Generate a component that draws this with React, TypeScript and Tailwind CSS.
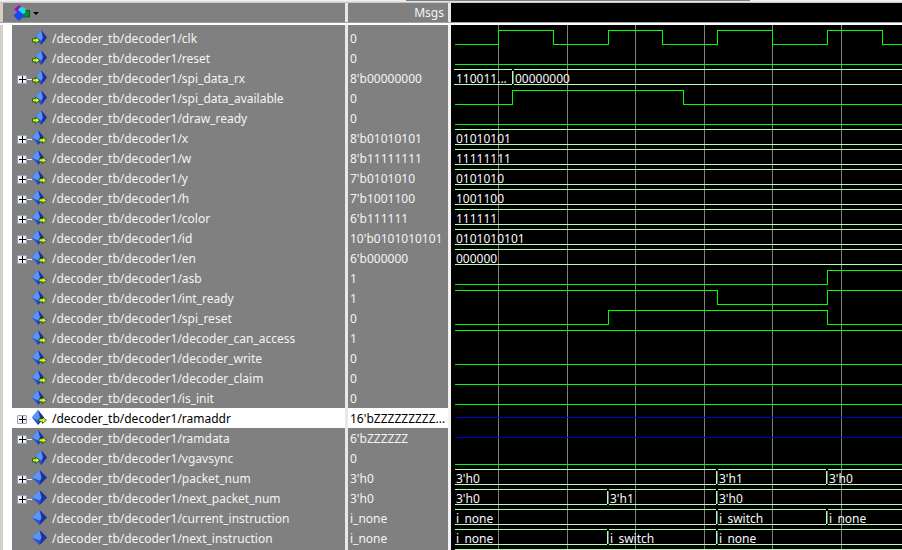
import React from "react";

type Dir = "in" | "out" | "none";

interface Signal {
  name: string;
  value: string;
  dir: Dir;
  expand?: boolean;
  selected?: boolean;
}

const signals: Signal[] = [
  { name: "clk", value: "0", dir: "in" },
  { name: "reset", value: "0", dir: "in" },
  { name: "spi_data_rx", value: "8'b00000000", dir: "in", expand: true },
  { name: "spi_data_available", value: "0", dir: "in" },
  { name: "draw_ready", value: "0", dir: "in" },
  { name: "x", value: "8'b01010101", dir: "out", expand: true },
  { name: "w", value: "8'b11111111", dir: "out", expand: true },
  { name: "y", value: "7'b0101010", dir: "out", expand: true },
  { name: "h", value: "7'b1001100", dir: "out", expand: true },
  { name: "color", value: "6'b111111", dir: "out", expand: true },
  { name: "id", value: "10'b0101010101", dir: "out", expand: true },
  { name: "en", value: "6'b000000", dir: "out", expand: true },
  { name: "asb", value: "1", dir: "out" },
  { name: "int_ready", value: "1", dir: "out" },
  { name: "spi_reset", value: "0", dir: "out" },
  { name: "decoder_can_access", value: "1", dir: "out" },
  { name: "decoder_write", value: "0", dir: "out" },
  { name: "decoder_claim", value: "0", dir: "out" },
  { name: "is_init", value: "0", dir: "out" },
  { name: "ramaddr", value: "16'bZZZZZZZZZ...", dir: "out", expand: true, selected: true },
  { name: "ramdata", value: "6'bZZZZZZ", dir: "out", expand: true },
  { name: "vgavsync", value: "0", dir: "in" },
  { name: "packet_num", value: "3'h0", dir: "none", expand: true },
  { name: "next_packet_num", value: "3'h0", dir: "none", expand: true },
  { name: "current_instruction", value: "i_none", dir: "none" },
  { name: "next_instruction", value: "i_none", dir: "none" },
];

const rowTop = (i: number) => 28 + i * 20;
const gridX = [498, 567, 635, 704, 772, 841];

// bus rows: row index -> [label, x of the transition]
const buses: { row: number; start?: number; segs: [string, number][] }[] = [
  { row: 2, start: 454, segs: [["110011...", 455], ["00000000", 513]] },
  { row: 5, segs: [["01010101", 455]] },
  { row: 6, segs: [["11111111", 455]] },
  { row: 7, segs: [["0101010", 455]] },
  { row: 8, segs: [["1001100", 455]] },
  { row: 9, segs: [["111111", 455]] },
  { row: 10, segs: [["0101010101", 455]] },
  { row: 11, segs: [["000000", 455]] },
  { row: 22, segs: [["3'h0", 455], ["3'h1", 717], ["3'h0", 827]] },
  { row: 23, segs: [["3'h0", 455], ["3'h1", 608], ["3'h0", 717]] },
  { row: 24, segs: [["i_none", 455], ["i_switch", 717], ["i_none", 827]] },
  { row: 25, segs: [["i_none", 455], ["i_switch", 608], ["i_none", 717]] },
];

// bit rows: row, starts high?, toggle points
const bits: { row: number; high: boolean; edges: number[] }[] = [
  { row: 0, high: false, edges: [498, 553, 608, 662, 717, 772, 827, 882] },
  { row: 1, high: false, edges: [] },
  { row: 3, high: false, edges: [512, 683] },
  { row: 4, high: false, edges: [] },
  { row: 12, high: false, edges: [827] },
  { row: 13, high: true, edges: [717, 827] },
  { row: 14, high: false, edges: [608, 827] },
  { row: 15, high: true, edges: [] },
  { row: 16, high: false, edges: [] },
  { row: 17, high: false, edges: [] },
  { row: 18, high: false, edges: [] },
  { row: 21, high: false, edges: [] },
];

function bitPath(b: { row: number; high: boolean; edges: number[] }) {
  const hi = rowTop(b.row) + 2.5;
  const lo = rowTop(b.row) + 16.5;
  let level = b.high;
  let d = `M455 ${level ? hi : lo}`;
  for (const e of b.edges) {
    level = !level;
    d += ` H${e + 0.5} V${level ? hi : lo}`;
  }
  return d + " H902";
}

function busPath(row: number, start: number, segs: [string, number][]) {
  const top = rowTop(row) + 1.5;
  const bot = rowTop(row) + 16.5;
  const stops = segs.slice(1).map((s) => s[1]);
  let d = "";
  let x = start;
  for (const s of stops) {
    d += `M${x} ${top} H${s - 1} M${x} ${bot} H${s - 1} `;
    d += `M${s - 0.5} ${top + 1} V${bot - 1} `;
    x = s + 1;
  }
  return d + `M${x} ${top} H902 M${x} ${bot} H902`;
}

// darker second half of the transition mark
function busEdgePath(row: number, segs: [string, number][]) {
  const top = rowTop(row) + 2.5;
  const bot = rowTop(row) + 15.5;
  return segs
    .slice(1)
    .map((s) => `M${s[1] + 0.5} ${top} V${bot}`)
    .join(" ");
}

const Logo = () => (
  <svg width="17" height="17" viewBox="0 0 17 17">
    <path d="M0.5 5.5 L6 0.5 L11.5 5.5 L6 10 Z" fill="#7a1fa0" stroke="#e040e0" />
    <rect x="9.5" y="6.5" width="7" height="6.5" fill="#0a8a30" stroke="#0b5a20" />
    <circle cx="9" cy="6.5" r="3.6" fill="#20d8e8" />
    <path d="M6 6.5 L11.5 11.5 L6 17 L0.5 11.5 Z" fill="#1848f0" />
  </svg>
);

const SignalIcon = ({ dir }: { dir: Dir }) => {
  // diamond shifts away from the arrow when a port arrow is shown
  const l = dir === "in" ? 3 : 0;
  const r = dir === "out" ? 12 : 15;
  const c = (l + r) / 2;
  return (
    <svg width="15" height="15" viewBox="0 0 15 15" className="shrink-0 self-start mt-[2px]">
      <path d={`M${c} 0 L${r} 7.5 L${c} 15 L${l} 7.5 Z`} fill="#2a50d8" />
      <path d={`M${c} 0 L${l} 7.5 L${c} 10.5 L${r - 3} 6 Z`} fill="#5b94f4" />
      <path d={`M${c} 0 L${r} 7.5 L${c} 15 L${c + 2} 7.5 Z`} fill="#1c2f9c" />
      {dir === "in" && (
        <path d="M0.5 8.8 H3.8 V7 L7.8 10.3 L3.8 13.6 V11.8 H0.5 Z" fill="#c6ff2a" stroke="#123000" strokeWidth="0.7" />
      )}
      {dir === "out" && (
        <path d="M7 8.8 H10.5 V7 L14.5 10.3 L10.5 13.6 V11.8 H7 Z" fill="#c6ff2a" stroke="#123000" strokeWidth="0.7" />
      )}
    </svg>
  );
};

const Expander = ({ show }: { show?: boolean }) =>
  show ? (
    <div className="flex items-center shrink-0 self-start mt-[7px]">
      <div className="w-[10px] h-[9px] bg-[#eef0f8] border border-[#9aa0b4] rounded-[1px] flex items-center justify-center">
        <svg width="7" height="7" viewBox="0 0 7 7">
          <path d="M0 3.5 H7 M3.5 0 V7" stroke="#000" strokeWidth="1" />
        </svg>
      </div>
      <div className="w-[5px] h-px bg-[#f0f0f0]" />
    </div>
  ) : (
    <div className="w-[15px] shrink-0" />
  );

const App = () => {
  return (
    <div className="w-[902px] h-[550px] overflow-hidden flex flex-col bg-[#d4d0c8] font-['Noto_Sans',sans-serif] text-[12px]">
      <div className="h-px flex bg-[#f0f0f0]">
        <div className="w-[406px]" />
        <div className="w-[344px] bg-[#808080]" />
      </div>
      <div className="h-[2px] bg-[#e4e4e4] border-b border-[#c8c8c8]" />
      <div className="h-[19px] flex pl-[3px]">
        <div className="w-[342px] bg-[#808080] flex items-center gap-[3px] pl-[10px]">
          <Logo />
          <div className="w-0 h-0 border-x-[3px] border-x-transparent border-t-[3px] border-t-black mt-[2px]" />
        </div>
        <div className="w-[3px] bg-[#e8e8e8]" />
        <div className="w-[100px] bg-[#808080] text-right pr-[4px] text-[#f4f4f4] leading-[19px]">Msgs</div>
        <div className="w-[3px] bg-[#e8e8e8]" />
        <div className="flex-1 bg-black" />
      </div>
      <div className="h-[3px] bg-white border-t border-[#a0a0a0]" />
      <div className="flex-1 flex min-h-0">
        <div className="w-[342px] ml-[3px] pl-[9px] bg-white shrink-0">
          <div className="h-full bg-[#808080] pt-[3px]">
            {signals.map((s) => (
              <div
                key={s.name}
                className={`h-5 flex pl-[5px] whitespace-nowrap ${
                  s.selected ? "bg-white text-black" : "text-[#f4f4f4]"
                }`}
              >
                <Expander show={s.expand} />
                <SignalIcon dir={s.dir} />
                <span className="ml-[5px] leading-[22px]">/decoder_tb/decoder1/{s.name}</span>
              </div>
            ))}
          </div>
        </div>
        <div className="w-[3px] bg-[#e8e8e8] shrink-0" />
        <div className="w-[100px] bg-[#808080] pt-[3px] shrink-0">
          {signals.map((s) => (
            <div
              key={s.name}
              className={`h-5 pl-[2px] leading-[22px] whitespace-nowrap overflow-hidden ${
                s.selected ? "bg-white text-black" : "text-[#f4f4f4]"
              }`}
            >
              {s.value}
            </div>
          ))}
        </div>
        <div className="w-[3px] bg-[#f4f4f4] shrink-0" />
        <div className="flex-1 bg-black">
          <svg width="451" height="525" viewBox="451 25 451 525" className="block">
            {gridX.map((x) => (
              <path key={x} d={`M${x + 0.5} 25 V550`} stroke="#808080" />
            ))}
            {buses.map((b) =>
              b.segs.map(([label, x], i) => (
                <text
                  key={`${b.row}-${i}`}
                  x={i === 0 ? x + 1 : x + 2}
                  y={rowTop(b.row) + 15}
                  fill="#f8f8f8"
                  fontSize="12"
                >
                  {label}
                </text>
              ))
            )}
            {bits.map((b) => (
              <path key={b.row} d={bitPath(b)} fill="none" stroke="#00ff00" shapeRendering="crispEdges" />
            ))}
            <g fill="none" stroke="#b4ffb4" shapeRendering="crispEdges">
              {buses.map((b) => (
                <path key={b.row} d={busPath(b.row, b.start ?? 455, b.segs)} />
              ))}
              <path d="M455 549.5 H902" />
            </g>
            <g fill="none" stroke="#5a7f5a" shapeRendering="crispEdges">
              {buses.map((b) => (
                <path key={b.row} d={busEdgePath(b.row, b.segs)} />
              ))}
            </g>
            <path d="M455 417.5 H902 M455 437.5 H902" stroke="#0000d0" />
          </svg>
        </div>
      </div>
    </div>
  );
};

export default App;
